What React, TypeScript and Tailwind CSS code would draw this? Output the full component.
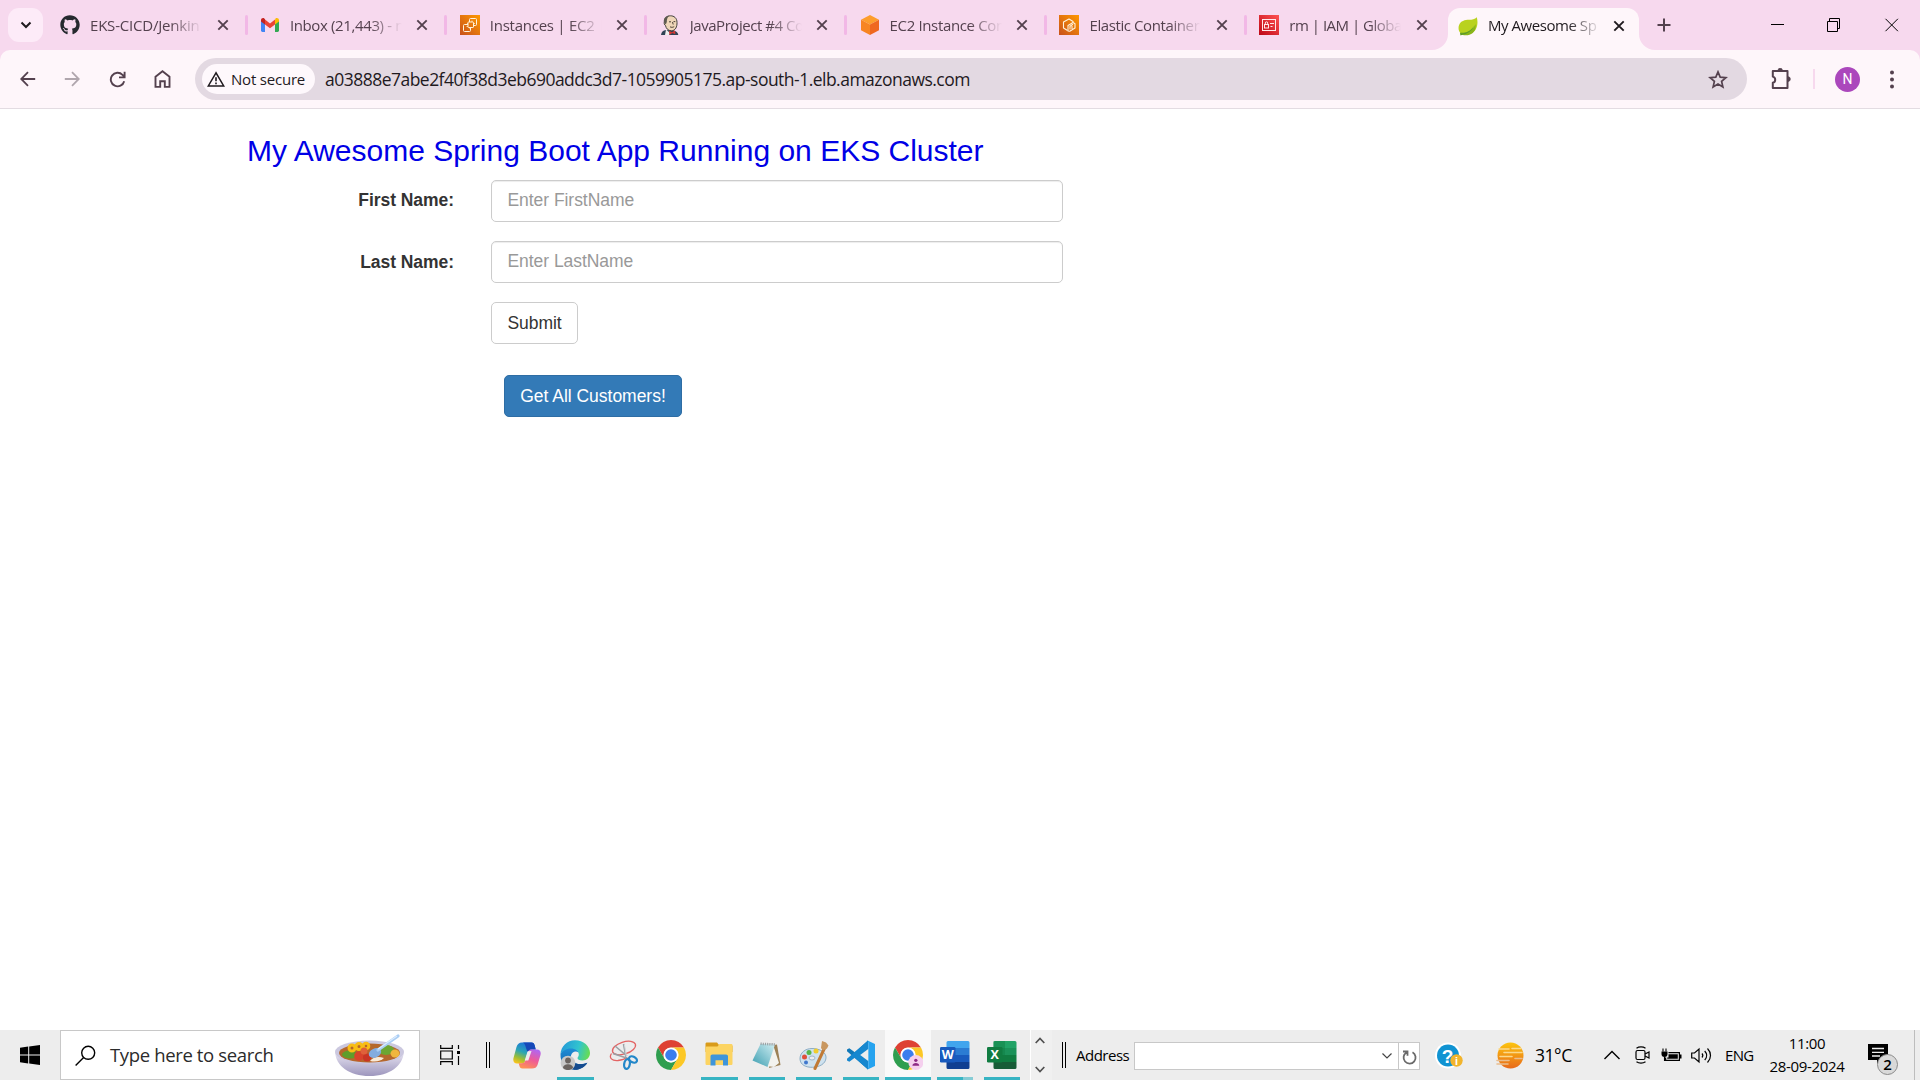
import React from "react";
import { FaGithub } from "react-icons/fa";

type Kids = { children?: React.ReactNode };

/* ---------- favicons ---------- */

const Gmail = () => (
  <svg width="20" height="20" viewBox="0 0 20 20">
    <path d="M1 5v10.500a1.400 1.400 0 0 0 1.400 1.400H5V8.500z" fill="#4285f4" />
    <path d="M15 8.500v8.400h2.600a1.400 1.400 0 0 0 1.400-1.400V5z" fill="#34a853" />
    <path d="M15 5v4.500l4-3V5.200c0-1.900-2.100-2.900-3.500-1.800z" fill="#fbbc04" />
    <path d="M5 9.500V4.600l5 3.800 5-3.800v4.900l-5 3.700z" fill="#ea4335" />
    <path d="M1 5.200v1.300l4 3V4.200l-.7-.6C3 2.400 1 3.500 1 5.200z" fill="#c5221f" />
  </svg>
);

const Ec2 = () => (
  <svg width="20" height="20" viewBox="0 0 20 20">
    <defs>
      <linearGradient id="ec2" x1="0" y1="1" x2="1" y2="0">
        <stop offset="0" stopColor="#c8511b" />
        <stop offset="1" stopColor="#f90" />
      </linearGradient>
    </defs>
    <rect width="20" height="20" fill="url(#ec2)" />
    <g fill="none" stroke="#fff3dc" strokeWidth="1">
      <rect x="8" y="7" width="5.500" height="5.500" rx=".6" />
      <path d="M9.500 7V4.500a1 1 0 0 1 1-1h5a1 1 0 0 1 1 1v5a1 1 0 0 1-1 1h-2M8 9.500H4.500a1 1 0 0 0-1 1v5a1 1 0 0 0 1 1h5a1 1 0 0 0 1-1v-3" />
      <path d="M7 8.500h1M12 5.500V7M13.500 8.500H15M10 12.500V14M6.500 11.500H8" strokeWidth=".7" />
    </g>
  </svg>
);

const Jenkins = () => (
  <svg width="20" height="20" viewBox="0 0 20 20">
    <path d="M1 20c.3-3 2-4.500 5-5l7 .5c3 .5 5 2 5.300 4.500z" fill="#2f4355" />
    <path d="M4.500 6.500C4.500 2.800 7 .8 10.500.8S17 3 17 7.500c.2 4-1.500 8.300-5.500 8.300-3.500 0-5.500-2.500-6-5.300-1.300-.5-1.700-2.500-1-4z" fill="#efd6b8" stroke="#30312c" strokeWidth=".9" />
    <path d="M3.800 7C3.500 3 6 .5 9.500.7 7.500 2 6.700 4 6.800 7l-1 2.500z" fill="#5d5a50" />
    <path d="M9 6.800h2M13.500 6.600h1.800M10 11.800c1.500.8 3 .6 4.200-.2M12.500 7l.7 2.500" fill="none" stroke="#3c322a" strokeWidth=".9" />
    <path d="M6 14.500l4 3.500-1 2H5z" fill="#eee" />
    <path d="M9 15.800l3 1.500 3-1.700.4 3.700-3.200-1.200L9.500 20z" fill="#d33833" />
  </svg>
);

const Cube = () => (
  <svg width="20" height="20" viewBox="0 0 20 20">
    <path d="M10 0l9 4.700-9 4.800-9-4.800z" fill="#fd9d2c" />
    <path d="M1 4.700l9 4.800V20l-9-4.800z" fill="#f78522" />
    <path d="M19 4.700l-9 4.800V20l9-4.800z" fill="#ef6820" />
  </svg>
);

const Ecr = () => (
  <svg width="20" height="20" viewBox="0 0 20 20">
    <rect width="20" height="20" fill="url(#ec2)" />
    <g fill="none" stroke="#fff3dc" strokeWidth="1.100" strokeLinejoin="round">
      <path d="M8.500 15.500L4.500 13V7L10 4l4.500 2.700" />
      <path d="M9 16V10.500l5-3 2 1.200V13l-5.200 3.200zM11 14.500v-3.300l3-1.900M13 14v-3" />
    </g>
  </svg>
);

const Iam = () => (
  <svg width="20" height="20" viewBox="0 0 20 20">
    <defs>
      <linearGradient id="iam" x1="0" y1="1" x2="1" y2="0">
        <stop offset="0" stopColor="#bd0816" />
        <stop offset="1" stopColor="#ff5252" />
      </linearGradient>
    </defs>
    <rect width="20" height="20" fill="url(#iam)" />
    <g fill="none" stroke="#ffe9e9" strokeWidth="1">
      <rect x="3.500" y="4.500" width="13" height="11" />
      <rect x="5.500" y="9.500" width="4" height="3.500" />
      <path d="M6.300 9.500V8a1.200 1.200 0 0 1 2.400 0v1.500M11 8.500h4M11.500 11.500h2" />
    </g>
  </svg>
);

const Leaf = () => (
  <svg width="20" height="20" viewBox="0 0 20 20">
    <path d="M18.800 1.200c.8 3 1.300 8-1 12-2.500 4.500-8.500 6.500-14.300 4.800C.5 16 0 12 1 9.200 2.500 5 7 3.800 11 3.800c3 0 6-.4 7.800-2.600z" fill="#b9d21f" />
    <path d="M2.600 16.300C8 17.500 15 15 17.500 8c1 5-1.500 9.500-6 10.700-3 1-7 .5-9.500-.7z" fill="#8ab51b" />
    <path d="M2 17.200c5.500.4 11-2 14.500-8-2 5-6.500 8.500-11.500 9.400l-2.500.9z" fill="#5a9a2c" />
  </svg>
);

/* ---------- browser chrome ---------- */

const CloseX = ({ dark = false }: { dark?: boolean }) => (
  <svg width="12" height="12" viewBox="0 0 12 12">
    <path d="M1.300 1.300l9.400 9.400M10.700 1.300L1.300 10.700" stroke={dark ? "#1f1a1e" : "#54414e"} strokeWidth="1.900" />
  </svg>
);

const tabs = [
  { title: "EKS-CICD/Jenkin", icon: <FaGithub size={20} color="#25292e" />, tracking: "tracking-[-0.200px]" },
  { title: "Inbox (21,443) - n", icon: <Gmail />, tracking: "tracking-[-0.370px]" },
  { title: "Instances | EC2 | a", icon: <Ec2 />, tracking: "tracking-[-0.250px]" },
  { title: "JavaProject #4 Co", icon: <Jenkins />, tracking: "tracking-[-0.450px]" },
  { title: "EC2 Instance Con", icon: <Cube />, tracking: "tracking-[-0.350px]" },
  { title: "Elastic Container", icon: <Ecr />, tracking: "tracking-[-0.400px]" },
  { title: "rm | IAM | Global", icon: <Iam />, tracking: "tracking-[-0.500px]" },
];

type TabProps = { title: string; icon: React.ReactNode; tracking: string; last: boolean };

const Tab = ({ title, icon, tracking, last }: TabProps) => (
  <div className="flex h-full w-[199.900px] shrink-0 items-center pl-[13px]">
    <span className="w-5 shrink-0">{icon}</span>
    <span className={`ml-[10px] w-[125px] shrink-0 whitespace-nowrap text-[15px] text-[#54414e] [mask-image:linear-gradient(to_right,black_80px,transparent_112px)] ${tracking}`}>
      {title}
    </span>
    <span className="ml-[1.600px] shrink-0"><CloseX /></span>
    {!last && <span className="ml-[16px] h-5 w-[3px] shrink-0 rounded-full bg-[#f2b8e6]" />}
  </div>
);

const TabStrip = () => (
  <div className="flex h-[50px] items-center bg-[#f7d9ee]">
    <div className="ml-2 flex h-[34px] w-[35px] shrink-0 items-center justify-center rounded-[11px] bg-[#fdebf8]">
      <svg width="12" height="8" viewBox="0 0 12 8">
        <path d="M1.500 1.500L6 6l4.500-4.500" fill="none" stroke="#1f1a1e" strokeWidth="2" />
      </svg>
    </div>
    <div className="flex h-full w-[1405px] shrink-0 pl-[4px]">
      {tabs.map((t, i) => (
        <Tab key={t.title} {...t} last={i === tabs.length - 1} />
      ))}
    </div>
    <div className="relative flex h-[42px] w-[191px] shrink-0 items-center self-end rounded-t-[12px] bg-[#fef6fa] pb-[8px] pl-[10px] pt-[1px]">
      <svg className="absolute -left-4 bottom-0" width="16" height="16"><path d="M16 0v16H0A16 16 0 0 0 16 0z" fill="#fef6fa" /></svg>
      <svg className="absolute -right-4 bottom-0" width="16" height="16"><path d="M0 0v16h16A16 16 0 0 1 0 0z" fill="#fef6fa" /></svg>
      <Leaf />
      <span className="ml-[10px] w-[120px] shrink-0 whitespace-nowrap text-[15px] tracking-[-0.450px] text-[#1f1a1e] [mask-image:linear-gradient(to_right,black_80px,transparent_113px)]">
        My Awesome Sp
      </span>
      <span className="ml-[5px]"><CloseX dark /></span>
    </div>
    <svg className="ml-[18px]" width="14" height="14" viewBox="0 0 14 14">
      <path d="M7 .5v13M.5 7h13" stroke="#54414e" strokeWidth="2" />
    </svg>
    <svg className="ml-auto mr-[21px]" width="128" height="14" viewBox="0 0 128 14" fill="none" stroke="#000">
      <path d="M0 6.500h13" />
      <path d="M56.500 3.500h10v10h-10zM58.500 3.500v-3h10v10h-2" />
      <path d="M114.500.8l12.400 12.400M126.900.8l-12.400 12.400" />
    </svg>
  </div>
);

const Toolbar = () => (
  <div className="bg-[#f7d9ee]">
    <div className="flex h-[59px] items-center rounded-t-[10px] border-b border-[#e3dce2] bg-[#fef6fa]">
      <div className="flex w-[195px] shrink-0 items-center pl-5">
        <svg width="16" height="16" viewBox="0 0 16 16" fill="none" stroke="#54414e" strokeWidth="1.800"><path d="M15.200 8H1.500M8 1.200L1.200 8 8 14.800" /></svg>
        <svg className="ml-[28px]" width="16" height="16" viewBox="0 0 16 16" fill="none" stroke="#b0a6ad" strokeWidth="1.800"><path d="M.8 8h14M8 1.200L14.800 8 8 14.800" /></svg>
        <svg className="ml-[29px]" width="17" height="17" viewBox="0 0 17 17" fill="none" stroke="#54414e" strokeWidth="1.900"><path d="M15.200 10.200A6.800 6.800 0 1 1 13.500 3.800L15.400 5.800M15.600.8v5.600H10" /></svg>
        <svg className="ml-[28px]" width="17" height="18" viewBox="0 0 17 18" fill="none" stroke="#54414e" strokeWidth="1.900"><path d="M1.500 6.700L8.500 1.300l7 5.400v10.200h-4.700v-5.700H6.200v5.700H1.500z" /></svg>
      </div>
      <div className="flex h-[42px] w-[1552px] shrink-0 items-center rounded-full bg-[#e3d9e2] pl-[7px] pr-[19px]">
        <div className="flex h-[30px] w-[113px] items-center rounded-full bg-[#fef8fc] pl-[5px]">
          <svg width="18" height="16" viewBox="0 0 18 16" fill="none" stroke="#1f1a1e"><path d="M9 1.800L1.300 14.900h15.400z" strokeWidth="1.500" /><path d="M9 6.200v4M9 11.500v1.700" strokeWidth="1.600" /></svg>
          <span className="ml-[6px] whitespace-nowrap text-[15px] tracking-[-0.200px] text-[#1f1a1e]">Not secure</span>
        </div>
        <span className="ml-[10px] mt-[1px] whitespace-nowrap text-[17.500px] tracking-[-0.520px] text-[#1f1a1e]">
          a03888e7abe2f40f38d3eb690addc3d7-1059905175.ap-south-1.elb.amazonaws.com
        </span>
        <svg className="ml-auto" width="20" height="19" viewBox="0 0 20 19" fill="none" stroke="#54414e" strokeWidth="1.700"><path d="M10 1.900l2.200 5.300 5.700.5-4.300 3.700 1.300 5.600L10 14l-4.900 3 1.300-5.600-4.300-3.700 5.700-.5z" /></svg>
      </div>
      <svg className="-mt-px ml-[24px]" width="21" height="21" viewBox="0 0 21 21" fill="none" stroke="#54414e" strokeWidth="2">
        <path d="M2.500 3H16.500v17H1.800v-5.200a3.200 3.200 0 0 0 0-6.200V3z" strokeLinejoin="round" />
        <path d="M7 2.500a2.200 2.200 0 0 1 4.400 0zM17 8.800a2.300 2.300 0 0 1 0 4.600z" fill="#54414e" strokeWidth=".8" />
      </svg>
      <span className="ml-[21px] h-[20px] w-[2px] bg-[#f7d9ee]" />
      <span className="ml-[20px] flex h-[25px] w-[25px] items-center justify-center rounded-full bg-[#ab47bc] font-[Roboto] text-[14px] text-white">N</span>
      <svg className="ml-[30px]" width="4" height="19" viewBox="0 0 4 19" fill="#54414e"><circle cx="2" cy="2.500" r="2" /><circle cx="2" cy="9.500" r="2" /><circle cx="2" cy="16.500" r="2" /></svg>
    </div>
  </div>
);

/* ---------- web page ---------- */

const Field = ({ label, placeholder }: { label: string; placeholder: string }) => (
  <div className="mb-[18.800px] flex h-[42.300px]">
    <label className="w-[206px] pt-[8.450px] text-right text-[17.500px] font-bold leading-[25px] tracking-[-0.050px] text-[#333]">{label}</label>
    <input
      className="ml-[37px] h-full w-[572px] rounded-[5px] border border-[#ccc] bg-white pb-[1px] pl-[15.500px] pr-4 text-[17.500px] tracking-[-0.050px] shadow-[inset_0_1px_1px_rgba(0,0,0,.075)] placeholder:text-[#999]"
      placeholder={placeholder}
    />
  </div>
);

const Page = () => (
  <main className="flex-1 bg-white pl-[248px] pt-[23px] font-['Liberation_Sans',Arial,sans-serif]">
    <h3 className="-ml-px mb-[11px] whitespace-nowrap text-[30px] leading-[37px] text-[#0000e6]">My Awesome Spring Boot App Running on EKS Cluster</h3>
    <Field label="First Name:" placeholder="Enter FirstName" />
    <Field label="Last Name:" placeholder="Enter LastName" />
    <div className="flex flex-col items-start pl-[243px]">
      <button className="h-[42px] w-[87px] rounded-[5px] border border-[#ccc] bg-white pb-[1px] text-[17.500px] tracking-[-0.050px] text-[#333]">Submit</button>
      <button className="ml-[13px] mt-[31px] h-[42px] w-[178px] whitespace-nowrap rounded-[5px] border border-[#2e6da4] bg-[#337ab7] pb-[1px] text-[17.500px] tracking-[-0.020px] text-white">Get All Customers!</button>
    </div>
  </main>
);

/* ---------- taskbar icons ---------- */

const Bowl = () => (
  <svg width="71" height="44" viewBox="0 0 71 44">
    <defs>
      <linearGradient id="bowl" x1="0" y1="0" x2="0" y2="1">
        <stop offset="0" stopColor="#e9e6f3" />
        <stop offset="1" stopColor="#9d96bd" />
      </linearGradient>
    </defs>
    <path d="M1 19c1 14 14 24 34.500 24S68.500 33 70 19z" fill="url(#bowl)" />
    <ellipse cx="35.500" cy="19" rx="34.500" ry="11.500" fill="#cbc8df" />
    <ellipse cx="35.500" cy="20" rx="30.500" ry="9.500" fill="#b5672c" />
    <ellipse cx="16" cy="21.500" rx="8" ry="4" fill="#5f9d2b" />
    <ellipse cx="52" cy="17" rx="8" ry="5" fill="#6ca632" />
    <ellipse cx="61" cy="20.500" rx="4.500" ry="4" fill="#f0b63e" />
    <g fill="none" stroke="#f8bd16" strokeWidth="3"><circle cx="18" cy="15" r="3" /><circle cx="25" cy="13.500" r="3" /><circle cx="32" cy="13" r="2.800" /></g>
    <circle cx="25" cy="23" r="4.800" fill="#d8432b" /><circle cx="33" cy="24.500" r="4" fill="#c93424" /><circle cx="30" cy="18" r="3.500" fill="#e0603a" />
    <path d="M36 28c3-4 8-5 14-3-3 3-8 4.500-14 3z" fill="#f8ead8" />
    <ellipse cx="41" cy="20" rx="6.500" ry="4.500" fill="#83acdf" transform="rotate(-25 41 20)" />
    <path d="M44 17L64 3" stroke="#a9cdf4" strokeWidth="3.200" strokeLinecap="round" />
    <path d="M44 16L63 3" stroke="#dcebfc" strokeWidth="1.200" />
  </svg>
);

const Copilot = () => (
  <svg width="28" height="27" viewBox="0 0 28 27">
    <defs>
      <linearGradient id="cpA" x1="0.600" y1="0" x2="0.200" y2="1">
        <stop offset="0" stopColor="#1a6fdc" /><stop offset=".45" stopColor="#2aa5b5" /><stop offset=".75" stopColor="#9bbd36" /><stop offset="1" stopColor="#fbc31b" />
      </linearGradient>
      <linearGradient id="cpB" x1="0.700" y1="0" x2="0.300" y2="1">
        <stop offset="0" stopColor="#b265f0" /><stop offset=".5" stopColor="#ee5b98" /><stop offset="1" stopColor="#ff9154" />
      </linearGradient>
    </defs>
    <path d="M9 .5h9.500c2 0 2.700 1.300 3.200 3l1 4h-4c-2.300 0-3.400 1-4.100 3.200l-2.500 8.300c-.7 2-1.800 2.500-3.500 2.500H4c-2.800 0-4.300-2.300-3.500-5.500l3-11C4.500 2 6 .5 9 .5z" fill="url(#cpA)" />
    <path d="M18.500.5c2 0 2.700 1.300 3.200 3l1 4h-4c-2 0-3.200 1-4 3L13 6c-.5-2-1-4.500-3-5.500z" fill="#1548b8" />
    <path d="M19 26.500H9.500c-2 0-2.700-1.300-3.200-3l-.6-2.200h3c2.300 0 3.200-1 3.900-3.200L15 9.900c.7-2 1.800-2.400 3.500-2.400H24c2.800 0 4.300 2.300 3.500 5.500l-3 10c-.9 2.500-2.500 3.500-5.500 3.500z" fill="url(#cpB)" />
    <path d="M14.600 9.300l3.900-.2-3.200 9.500h-3.600z" fill="#ededed" />
  </svg>
);

const Edge = () => (
  <svg className="mr-px" width="30" height="30" viewBox="0 0 30 30">
    <defs>
      <linearGradient id="edA" x1="0" y1=".3" x2="1" y2=".5"><stop offset="0" stopColor="#2498d8" /><stop offset=".6" stopColor="#31c4cf" /><stop offset="1" stopColor="#66dc54" /></linearGradient>
      <linearGradient id="edB" x1="0" y1="0" x2="0" y2="1"><stop offset="0" stopColor="#1f8fd8" /><stop offset="1" stopColor="#1160ab" /></linearGradient>
    </defs>
    <path d="M.5 14C2.500 9.500 6 7.500 11 7.500c4 0 7 2 7.500 5-2.500-2-6.500-1-7.500 3-1 6 6 11 16.300 7.300C25 27 20 30 14.500 29.800 6 29.500 0 23 .5 14z" fill="url(#edB)" />
    <path d="M.5 14C1 6 7.200.2 15 .2c8.500 0 15 6 15 12.800 0 4.500-3.300 7.500-7.500 7.500-3.500 0-5-1.200-5-2.400 0-.8 1.300-1.500 1.300-3.600 0-3.500-3.500-6-8-6C6 8.500 2.500 11 .5 14z" fill="url(#edA)" />
    <path d="M11 17c0 6 7.500 9.500 16.300 5.800C25 27 20 30 14.500 29.800 9 28 8 21 11 17z" fill="#154a8d" />
    <circle cx="8" cy="23" r="7.300" fill="#c9c9c9" />
    <circle cx="8" cy="20.500" r="2.900" fill="#6b6460" /><path d="M3 28c0-5 10-5 10 0a7 7 0 0 1-10 0z" fill="#6b6460" />
  </svg>
);

const Snip = () => (
  <svg width="29" height="30" viewBox="0 0 29 30" fill="none">
    <g stroke="#e36464" strokeWidth="1.300"><ellipse cx="15" cy="8" rx="12" ry="6" transform="rotate(-18 15 8)" /><path d="M2.500 13.500C-.5 18 3 21 9 20.500c4-.5 7-1.500 9-3" /></g>
    <path d="M14.500 4l2.500 13M4 13.500l15 5M6 6l12 10" stroke="#9aa0a5" strokeWidth="1.600" />
    <path d="M15.500 5l2 12" stroke="#d6dadd" strokeWidth="1" />
    <g stroke="#2387c9" strokeWidth="2.200"><ellipse cx="18" cy="24" rx="2.800" ry="5" transform="rotate(10 18 24)" /><ellipse cx="24" cy="19.500" rx="4.200" ry="2.800" transform="rotate(28 24 19.500)" /></g>
  </svg>
);

const Chrome = ({ children }: Kids) => (
  <svg width="30" height="30" viewBox="0 0 48 48">
    <path d="M44.780 12A24 24 0 0 0 3.220 12L13.610 30A12 12 0 0 1 24 12z" fill="#de4133" />
    <path d="M3.220 12A24 24 0 0 0 24 48L34.390 30A12 12 0 0 1 13.610 30z" fill="#2f9e4f" />
    <path d="M44.780 12A24 24 0 0 1 24 48L34.390 30A12 12 0 0 0 24 12z" fill="#fcc826" />
    <circle cx="24" cy="24" r="11.800" fill="#fff" />
    <circle cx="24" cy="24" r="9.300" fill="#3b7ded" />
    {children}
  </svg>
);

const Explorer = () => (
  <svg className="mb-[2px] mr-px" width="28" height="24" viewBox="0 0 28 24">
    <path d="M.5 2c0-1 .5-1.500 1.500-1.500h10L14 3h12c1 0 1.500.5 1.500 1.500V10H.5z" fill="#d99b1a" />
    <path d="M1.700 4.500H12.500L14.500 2H26.300a1.200 1.200 0 0 1 1.200 1.200V21.800a1.200 1.200 0 0 1-1.200 1.200H1.700A1.200 1.200 0 0 1 .5 21.800V5.700a1.200 1.200 0 0 1 1.200-1.200z" fill="#fcd462" />
    <path d="M5.500 23.500v-9c0-1.300.7-2 2-2h13.500c1.300 0 2 .7 2 2v9h-5v-5.300h-7.500v5.300z" fill="#3e95da" />
  </svg>
);

const Notepad = () => (
  <svg className="mr-px" width="29" height="28" viewBox="0 0 29 28">
    <defs><linearGradient id="np" x1="0" y1="1" x2="1" y2="0"><stop offset="0" stopColor="#3b9db0" /><stop offset="1" stopColor="#d2eff3" /></linearGradient></defs>
    <path d="M22 4l3-.5L28.500 24 17 27z" fill="#9d8257" />
    <path d="M21 3.500L27 22l-5 4-7-1z" fill="#f3f3ee" />
    <path d="M8.500 3L23 3.500 15.500 26 .5 19.500z" fill="url(#np)" />
    <path d="M8.500 2.800L23.500 3.500" stroke="#9ba2a5" strokeWidth="2.500" strokeDasharray="1.200 1" />
  </svg>
);

const Paint = () => (
  <svg width="30" height="30" viewBox="0 0 30 30">
    <path d="M13 8.500C6 8.500.8 13 1 19c.3 6 6 8.500 12.500 8.300 7-.3 13-3.300 13.500-9.300.5-5.500-6-9.500-14-9.500z" fill="#cfe2ef" stroke="#8cadc5" strokeWidth="1" />
    <ellipse cx="13" cy="18" rx="3" ry="2" fill="#ededed" stroke="#90aabd" strokeWidth=".8" />
    <circle cx="5.500" cy="17" r="2.500" fill="#e0503c" /><circle cx="10" cy="12.500" r="2.500" fill="#55b649" /><circle cx="17" cy="11" r="2.500" fill="#f0cd2d" /><circle cx="7" cy="22.500" r="2" fill="#3f77cd" />
    <path d="M26.500 6L16 28.500" stroke="#c07a35" strokeWidth="3" strokeLinecap="round" />
    <path d="M23 1l4 1.500 2.500 3-1.500 3-4 2-2-2.500z" fill="#c9975f" />
  </svg>
);

const VsCode = () => (
  <svg width="30" height="30" viewBox="0 0 30 30">
    <path d="M22 .5L8.800 12.300 3.300 8.200 1 9.400l0 1.800L22 29.500V21z" fill="#1178b8" />
    <path d="M22 29.500L8.800 17.700l-5.500 4.100L1 20.600v-1.800L22 .5V9z" fill="#1687cf" />
    <path d="M21.500.6L29 4v22l-7.500 3.400c.5-.7.700-1.300.7-2.400V3c0-1.100-.2-1.700-.7-2.400z" fill="#26a3ef" />
    <path d="M22.200 9v12l-8-6z" fill="#ededed" />
  </svg>
);

const Office = ({ letter, excel = false }: { letter: string; excel?: boolean }) => (
  <svg width="30" height="28" viewBox="0 0 30 28">
    <path d="M8 0h20a1.500 1.500 0 0 1 1.500 1.500V7h-23V1.500A1.500 1.500 0 0 1 8 0z" fill={excel ? "#21a366" : "#41a5ee"} />
    <path d="M6.500 7h23v7h-23z" fill={excel ? "#1b9259" : "#2b7cd3"} />
    <path d="M6.500 14h23v7h-23z" fill={excel ? "#107c41" : "#185abd"} />
    <path d="M6.500 21h23v5.500A1.500 1.500 0 0 1 28 28H8a1.500 1.500 0 0 1-1.500-1.500z" fill={excel ? "#185c37" : "#103f91"} />
    {excel && <path d="M6.500 0H18v14H6.500z" fill="#107c41" opacity=".45" />}
    <rect x="0" y="6" width="15.500" height="15.500" rx="1.300" fill={excel ? "#107c41" : "#185abd"} />
    <text x="7.700" y="18.200" textAnchor="middle" fontSize="12.500" fontWeight="700" fill="#fff" fontFamily="Open Sans, sans-serif">{letter}</text>
  </svg>
);

const Grip = () => (
  <span className="flex h-[26px] gap-[2px]"><i className="w-px bg-black" /><i className="w-px bg-black" /></span>
);

const Slot = ({ w, bar, active = false, children }: Kids & { w: string; bar?: string; active?: boolean }) => (
  <div className={`relative flex h-full shrink-0 items-center justify-center ${w} ${active ? "bg-[#f9f9f9]" : ""}`}>
    {children}
    {bar && <span className={`absolute bottom-0 h-[3px] bg-[#37b4c3] ${bar}`} />}
  </div>
);

const Taskbar = () => (
  <footer className="flex h-[50px] shrink-0 items-center bg-[#ededed] text-black">
    <Slot w="w-[60px]">
      <svg width="20" height="20" viewBox="0 0 20 20"><path d="M0 2.800l8.200-1.200v8H0zM9.200 1.500L20 0v9.600H9.200zM0 10.500h8.200v8L0 17.300zM9.200 10.500H20V20L9.200 18.600z" /></svg>
    </Slot>
    <div className="flex h-full w-[360px] shrink-0 items-center border border-[#c8c8c8] bg-white pl-[14px] pr-[14px]">
      <svg width="21" height="21" viewBox="0 0 21 21" fill="none" stroke="#000" strokeWidth="1.400"><circle cx="13.200" cy="7.800" r="6.500" /><path d="M8.600 12.400L.6 20.400" /></svg>
      <span className="ml-[14px] whitespace-nowrap text-[18.500px] tracking-[-0.360px] text-[#2b2b2b]">Type here to search</span>
      <span className="ml-auto"><Bowl /></span>
    </div>
    <Slot w="w-[60px]">
      <svg width="21" height="20" viewBox="0 0 21 20" fill="none" stroke="#000" strokeWidth="1.200"><path d="M.7 0v3.400h11.600V0M.7 20v-3.400h11.600V20M.7 6h11.600v8H.7zM18.500 0v4M18.500 11v9" /><path d="M17 6h3v3h-3z" fill="#000" stroke="none" /></svg>
    </Slot>
    <Slot w="w-[16px]"><Grip /></Slot>
    <div className="flex h-full w-[534px] shrink-0 pl-[7px]">
      <Slot w="w-[48px]"><Copilot /></Slot>
      <Slot w="w-[49px]" bar="w-[37px]"><Edge /></Slot>
      <Slot w="w-[46px]"><Snip /></Slot>
      <Slot w="w-[50px]"><Chrome /></Slot>
      <Slot w="w-[47px]" bar="w-[37px]"><Explorer /></Slot>
      <Slot w="w-[48px]" bar="w-[36px]"><Notepad /></Slot>
      <Slot w="w-[46px]" bar="w-[36px]"><Paint /></Slot>
      <Slot w="w-[48px]" bar="w-[36px]"><VsCode /></Slot>
      <Slot w="w-[46px]" bar="w-full" active>
        <Chrome>
          <circle cx="36.500" cy="36" r="12" fill="#f5d0ee" />
          <circle cx="36.500" cy="32.500" r="2.700" fill="#8e2a86" /><path d="M31 41c0-5.500 11-5.500 11 0z" fill="#8e2a86" />
        </Chrome>
      </Slot>
      <Slot w="w-[48px]" bar="left-[6px] w-[36px] border-r-[10px] border-[#86ccd5]"><Office letter="W" /></Slot>
      <Slot w="w-[46px]" bar="w-[36px]"><Office letter="X" excel /></Slot>
    </div>
    <div className="flex h-full w-[22px] shrink-0 flex-col items-center justify-between border-l border-white bg-[#f0f0f0] py-[7px] pr-[4px]">
      <svg width="10" height="7" viewBox="0 0 10 7" fill="none" stroke="#505050" strokeWidth="1.700"><path d="M.7 6L5 1.500 9.300 6" /></svg>
      <svg width="10" height="7" viewBox="0 0 10 7" fill="none" stroke="#505050" strokeWidth="1.700"><path d="M.7 1L5 5.500 9.300 1" /></svg>
    </div>
    <Slot w="w-[24px]"><Grip /></Slot>
    <span className="w-[58px] shrink-0 whitespace-nowrap text-[15px] tracking-[-0.500px]">Address</span>
    <div className="mt-[2px] flex h-[28px] w-[286px] shrink-0 items-center border border-[#c8c8c8] bg-white">
      <svg className="ml-auto" width="10" height="6" viewBox="0 0 10 6" fill="none" stroke="#444" strokeWidth="1.200"><path d="M.5.5L5 5 9.500.5" /></svg>
      <span className="ml-[6px] h-full w-px bg-[#c8c8c8]" />
      <svg className="ml-[3px] mr-[2px] mt-[2px]" width="15" height="15" viewBox="0 0 15 15" fill="none" stroke="#6a6a6a" strokeWidth="1.800"><path d="M4.500 2.400A6 6 0 1 0 10.500 2.300M1 1.500h4.500v4.300" /></svg>
    </div>
    <div className="flex w-[76px] shrink-0 pl-[15px]">
      <svg className="mt-[2px]" width="30" height="28" viewBox="0 0 30 28">
        <circle cx="13" cy="13.500" r="13" fill="#fff" /><circle cx="13" cy="13.500" r="11" fill="#1093d2" />
        <text x="12.500" y="20.500" textAnchor="middle" fontSize="19" fontWeight="700" fill="#fff" fontFamily="Liberation Sans, sans-serif">?</text>
        <circle cx="21.500" cy="18.500" r="6.200" fill="#f2b42c" />
        <text x="21.500" y="22.500" textAnchor="middle" fontSize="11" fontWeight="700" fill="#fff" fontFamily="Liberation Sans, sans-serif">i</text>
      </svg>
    </div>
    <svg className="shrink-0" width="28" height="27" viewBox="0 0 28 27">
      <defs><linearGradient id="sun" x1="0" y1="0" x2="0" y2="1"><stop offset="0" stopColor="#fcc40f" /><stop offset="1" stopColor="#e86a1a" /></linearGradient></defs>
      <circle cx="14.500" cy="13.500" r="13" fill="url(#sun)" />
      <g stroke="#fbd98c" strokeWidth="1.600" strokeLinecap="round"><path d="M3 7h10M8 10.500h18M16 6.500h9M4 14.500h12" /><path d="M1 18.500h12M19 16.500h7M1 22h11" stroke="#e9bd8d" /></g>
    </svg>
    <span className="ml-[11px] w-[69px] shrink-0 whitespace-nowrap text-[17.500px] tracking-[-0.450px]">31°C</span>
    <svg className="shrink-0" width="16" height="10" viewBox="0 0 16 10" fill="none" stroke="#000" strokeWidth="1.400"><path d="M.5 9L8 1.500 15.500 9" /></svg>
    <svg className="ml-[15px] shrink-0" width="15" height="18" viewBox="0 0 15 18" fill="none" stroke="#000" strokeWidth="1.200"><rect x="1" y="4.500" width="9" height="9" rx="1.500" /><path d="M10 8l4-2v6l-4-2M1.500 2.200C4 .4 8 .4 10.500 2.200M1.500 15.800c2.500 1.800 6.500 1.800 9 0" /></svg>
    <svg className="ml-[11px] shrink-0" width="21" height="15" viewBox="0 0 21 15">
      <path d="M4.600 4.600h13.800v7.800H4.600z" fill="none" stroke="#000" strokeWidth="1.200" />
      <path d="M6.200 6.200h10.600v4.600H6.200zM19 6.500h1.500v4H19z" />
      <path d="M0 2.500h7.500v7H0z" fill="#ededed" />
      <path d="M.5 3.500h6V6a3 3 0 0 1-6 0z" />
      <path d="M2 .5v3M5 .5v3M3.500 9v3.400H5" fill="none" stroke="#000" strokeWidth="1.100" />
    </svg>
    <svg className="ml-[9px] shrink-0" width="21" height="17" viewBox="0 0 21 17" fill="none" stroke="#000" strokeWidth="1.200"><path d="M.7 6h2.800L8 2v13l-4.500-4H.7zM11 6.500c1 1.200 1 2.800 0 4M13.700 4c2.400 2.700 2.400 6.300 0 9M16.500 1.500c4 4.200 4 9.800 0 14" /></svg>
    <span className="ml-[13px] w-[44px] shrink-0 whitespace-nowrap text-[15px] tracking-[-0.700px]">ENG</span>
    <div className="flex w-[76px] shrink-0 flex-col items-center whitespace-nowrap text-[15px] leading-[23px] tracking-[-0.330px]">
      <span>11:00</span>
      <span>28-09-2024</span>
    </div>
    <div className="relative ml-[23px] h-[30px] w-[30px] shrink-0">
      <svg className="mt-[4px]" width="20" height="20" viewBox="0 0 20 20"><path d="M0 0h20v16h-7l-4 4v-4H0z" /><path d="M4 4.500h12M4 8.300h12M4 12h8" stroke="#ededed" strokeWidth="1.300" /></svg>
      <span className="absolute bottom-[-5px] right-0 flex h-[21px] w-[21px] items-center justify-center rounded-full border border-[#8a8a8a] bg-[#d9d9d9] text-[15px] font-semibold">2</span>
    </div>
    <span className="ml-auto mr-[5px] h-full w-px bg-[#bdbdbd]" />
  </footer>
);

export default function App() {
  return (
    <div className="flex h-screen w-[1920px] flex-col overflow-hidden bg-white font-['Open_Sans','Noto_Sans',sans-serif]">
      <TabStrip />
      <Toolbar />
      <Page />
      <Taskbar />
    </div>
  );
}
